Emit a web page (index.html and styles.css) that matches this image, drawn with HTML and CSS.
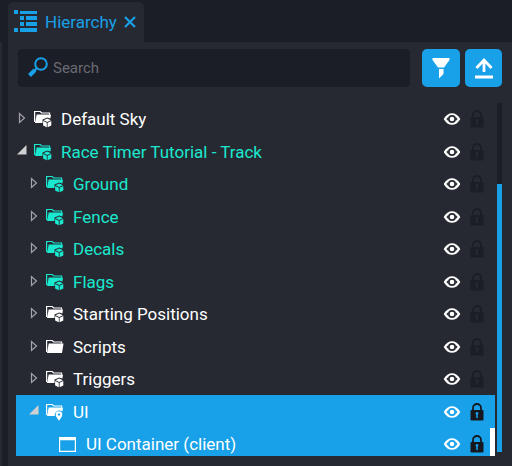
FILE: index.html
```
<!DOCTYPE html>
<html lang="en">
<head>
<meta charset="utf-8">
<title>Hierarchy</title>
<link rel="stylesheet" href="styles.css">
</head>
<body>
<svg class="sprite" aria-hidden="true">
  <symbol id="closed" viewBox="0 0 8 12"><path d="M1.500 1.500v9L6.500 6z" fill="none" stroke="#a2a4a8" stroke-width="1.200"/></symbol>
  <symbol id="open" viewBox="0 0 10 10"><path d="M9.500 0v9.500H0z" fill="#d0d0d0"/></symbol>
  <symbol id="folder" viewBox="0 0 18 18"><path d="M.6 14V2.500h5.600L7.700 4h7.800v1.500" fill="none" stroke="currentColor" stroke-width="1.200"/><path d="M2.700 5.600H17.500L16 15H1z" fill="currentColor"/></symbol>
  <symbol id="cube-folder" viewBox="0 0 18 18"><path d="M.6 12V1.500h5.600L7.700 3h7.800v1.500" fill="none" stroke="currentColor" stroke-width="1.200"/><path d="M2.700 4.600H17l-.6 4-3.200-1.200-4.700 2.100V13H1z" fill="currentColor"/><path d="M13.200 8.600l3.700 1.600-3.700 1.700-3.700-1.700zM9.100 11l3.700 1.700v4.600l-3.700-1.900zM17.300 11l-3.700 1.700v4.600l3.700-1.900z" fill="currentColor"/></symbol>
  <symbol id="pin-folder" viewBox="0 0 18 18"><path d="M.6 12V1.500h5.600L7.700 3h7.800v1.500" fill="none" stroke="currentColor" stroke-width="1.200"/><path d="M2.700 4.600H17l-.6 3.800C12.500 6 8.500 8.500 8.800 13H1z" fill="currentColor"/><path fill-rule="evenodd" d="M13 8.300a3.300 3.300 0 0 1 3.300 3.300C16.300 14 13 17.700 13 17.700S9.700 14 9.700 11.600A3.300 3.300 0 0 1 13 8.300zm0 2a1.200 1.200 0 1 0 .01 0z" fill="currentColor"/></symbol>
  <symbol id="window" viewBox="0 0 18 18"><path fill-rule="evenodd" d="M0 2h17v15H0zM1.200 5.200v10.600h14.600V5.200z" fill="currentColor"/></symbol>
  <symbol id="eye" viewBox="0 0 18 12"><path d="M.7 6C4.800-1.800 13.200-1.800 17.300 6 13.200 13.800 4.800 13.800 .7 6z" fill="#fff"/><circle cx="9" cy="6" r="4" fill="var(--row)"/><path d="M3.400 6L5.300 4v4zM14.600 6l-1.900-2v4z" fill="var(--row)"/><circle cx="9" cy="6" r="2.300" fill="#fff"/></symbol>
  <symbol id="lock" viewBox="0 0 14 18"><path d="M3 8V5a4 4 0 0 1 8 0v3" fill="none" stroke="var(--lock)" stroke-width="1.800"/><rect x=".5" y="7" width="13" height="10.500" rx="1" fill="var(--lock)"/><path d="M7 9a1.500 1.500 0 0 1 .8 2.700V15H6.200v-3.300A1.500 1.500 0 0 1 7 9z" fill="var(--row)"/></symbol>
</svg>

<header class="tabs">
  <div class="tab">
    <svg class="tab-icon" viewBox="0 0 24 24" fill="currentColor" aria-hidden="true"><path d="M0 0h4v4H0zM0 18h4v4H0zM6 1h17v3H6zM6 6h4v4H6zM12 6h11v4H12zM6 12h4v4H6zM12 12h11v4H12zM6 18h17v4H6z"/></svg>
    <span>Hierarchy</span>
    <button class="close" aria-label="Close"><svg viewBox="0 0 12 12"><path d="M1 1l10 10M11 1L1 11" stroke="currentColor" stroke-width="2.200"/></svg></button>
  </div>
</header>

<main class="panel">
  <div class="toolbar">
    <label class="search">
      <svg viewBox="0 0 20 20" aria-hidden="true"><circle cx="13" cy="7" r="5.800" fill="none" stroke="currentColor" stroke-width="2"/><path d="M9 11l-3 3" stroke="currentColor" stroke-width="2"/><path d="M7 13L1.500 18.500" stroke="currentColor" stroke-width="4"/></svg>
      <input type="text" placeholder="Search" aria-label="Search">
    </label>
    <button class="action" aria-label="Filter"><svg viewBox="0 0 20 22" fill="currentColor"><path d="M1.500 1h17v2L13 10.500H7L1.500 3zM8 12h4.500v5l-4 4H8z"/></svg></button>
    <button class="action" aria-label="Collapse all"><svg viewBox="0 0 20 22"><path d="M10 15V3M2.500 11L10 3l7.500 8M1 20h18" fill="none" stroke="currentColor" stroke-width="2.800"/></svg></button>
  </div>
  <div class="content">
    <ul class="tree">
      <li class="row"><button class="toggle" aria-label="Expand"><svg><use href="#closed"/></svg></button><svg class="kind"><use href="#cube-folder"/></svg><span class="name">Default Sky</span><button class="eye" aria-label="Visibility"><svg><use href="#eye"/></svg></button><button class="lock" aria-label="Lock"><svg><use href="#lock"/></svg></button></li>
      <li class="row group"><button class="toggle expanded" aria-label="Collapse"><svg><use href="#open"/></svg></button><svg class="kind"><use href="#cube-folder"/></svg><span class="name">Race Timer Tutorial - Track</span><button class="eye" aria-label="Visibility"><svg><use href="#eye"/></svg></button><button class="lock" aria-label="Lock"><svg><use href="#lock"/></svg></button></li>
      <li class="row child group"><button class="toggle" aria-label="Expand"><svg><use href="#closed"/></svg></button><svg class="kind"><use href="#cube-folder"/></svg><span class="name">Ground</span><button class="eye" aria-label="Visibility"><svg><use href="#eye"/></svg></button><button class="lock" aria-label="Lock"><svg><use href="#lock"/></svg></button></li>
      <li class="row child group"><button class="toggle" aria-label="Expand"><svg><use href="#closed"/></svg></button><svg class="kind"><use href="#cube-folder"/></svg><span class="name">Fence</span><button class="eye" aria-label="Visibility"><svg><use href="#eye"/></svg></button><button class="lock" aria-label="Lock"><svg><use href="#lock"/></svg></button></li>
      <li class="row child group"><button class="toggle" aria-label="Expand"><svg><use href="#closed"/></svg></button><svg class="kind"><use href="#cube-folder"/></svg><span class="name">Decals</span><button class="eye" aria-label="Visibility"><svg><use href="#eye"/></svg></button><button class="lock" aria-label="Lock"><svg><use href="#lock"/></svg></button></li>
      <li class="row child group"><button class="toggle" aria-label="Expand"><svg><use href="#closed"/></svg></button><svg class="kind"><use href="#cube-folder"/></svg><span class="name">Flags</span><button class="eye" aria-label="Visibility"><svg><use href="#eye"/></svg></button><button class="lock" aria-label="Lock"><svg><use href="#lock"/></svg></button></li>
      <li class="row child"><button class="toggle" aria-label="Expand"><svg><use href="#closed"/></svg></button><svg class="kind"><use href="#cube-folder"/></svg><span class="name">Starting Positions</span><button class="eye" aria-label="Visibility"><svg><use href="#eye"/></svg></button><button class="lock" aria-label="Lock"><svg><use href="#lock"/></svg></button></li>
      <li class="row child"><button class="toggle" aria-label="Expand"><svg><use href="#closed"/></svg></button><svg class="kind"><use href="#folder"/></svg><span class="name">Scripts</span><button class="eye" aria-label="Visibility"><svg><use href="#eye"/></svg></button><button class="lock" aria-label="Lock"><svg><use href="#lock"/></svg></button></li>
      <li class="row child"><button class="toggle" aria-label="Expand"><svg><use href="#closed"/></svg></button><svg class="kind"><use href="#cube-folder"/></svg><span class="name">Triggers</span><button class="eye" aria-label="Visibility"><svg><use href="#eye"/></svg></button><button class="lock" aria-label="Lock"><svg><use href="#lock"/></svg></button></li>
      <li class="row child selected"><button class="toggle expanded" aria-label="Collapse"><svg><use href="#open"/></svg></button><svg class="kind"><use href="#pin-folder"/></svg><span class="name">UI</span><button class="eye" aria-label="Visibility"><svg><use href="#eye"/></svg></button><button class="lock" aria-label="Lock"><svg><use href="#lock"/></svg></button></li>
      <li class="row leaf selected marked"><svg class="kind"><use href="#window"/></svg><span class="name">UI Container (client)</span><button class="eye" aria-label="Visibility"><svg><use href="#eye"/></svg></button><button class="lock" aria-label="Lock"><svg><use href="#lock"/></svg></button></li>
    </ul>
    <div class="track"><div class="thumb"></div></div>
  </div>
</main>
</body>
</html>
```
FILE: styles.css
```
:root {
  --bg: #1b1e26;
  --panel: #272932;
  --blue: #18a0e8;
  --teal: #1ae8cf;
}

* { box-sizing: border-box; }

body {
  margin: 0;
  height: 100vh;
  display: flex;
  flex-direction: column;
  overflow: hidden;
  background: var(--bg);
  color: #fff;
  font: 17px/24px Roboto, sans-serif;
}

svg { display: block; }
.sprite { position: absolute; width: 0; height: 0; }

button {
  display: block;
  flex: none;
  padding: 0;
  border: 0;
  background: none;
  color: inherit;
}

.tabs {
  flex: none;
  padding: 2px 8px 0;
}

.tab {
  display: flex;
  align-items: center;
  width: max-content;
  height: 40px;
  padding: 0 8px 0 6px;
  border-radius: 6px 6px 0 0;
  background: var(--panel);
  color: var(--blue);
}

.tab-icon {
  width: 24px;
  height: 24px;
  margin-right: 7px;
}

.close { margin-left: 7px; }
.close svg { width: 12px; height: 12px; }

.panel {
  flex: 1;
  min-height: 0;
  display: flex;
  flex-direction: column;
  padding: 7px 10px 10px 16px;
  background: linear-gradient(to right, var(--panel) 2px, var(--bg) 2px 8px, var(--panel) 8px);
}

.toolbar {
  flex: none;
  display: flex;
  gap: 5px;
  height: 38px;
  margin: 0 0 16px 2px;
}

.search {
  flex: 1;
  display: flex;
  align-items: center;
  gap: 5px;
  margin-right: 7px;
  padding: 0 10px;
  border-radius: 4px;
  background: var(--bg);
  color: var(--blue);
}

.search svg { flex: none; width: 20px; height: 20px; margin-bottom: 2px; }

.search input {
  flex: 1;
  min-width: 0;
  padding: 0;
  border: 0;
  outline: 0;
  background: none;
  color: #fff;
  font: 15px/20px Roboto, sans-serif;
}

.search input::placeholder { color: #6a6c73; opacity: 1; }

.action {
  display: flex;
  align-items: center;
  justify-content: center;
  width: 38px;
  border-radius: 5px;
  background: var(--blue);
}

.action + .action { width: 37px; }
.action svg { width: 20px; height: 22px; }

.content {
  flex: 1;
  min-height: 0;
  display: flex;
  gap: 2px;
}

.tree {
  flex: 1;
  margin: 0;
  padding: 0;
  overflow: hidden;
  list-style: none;
}

.row {
  --row: var(--panel);
  --lock: #1b1e26;
  position: relative;
  display: flex;
  align-items: center;
  height: 32px;
  padding: 0 11px 0 1px;
  background: var(--row);
}

.row:nth-child(even) { height: 33px; }
.child { padding-left: 13px; }
.leaf { padding-left: 43px; }
.group { color: var(--teal); }
.selected { --row: var(--blue); --lock: #15191f; }

.marked::after {
  content: "";
  position: absolute;
  inset: 0 0 0 auto;
  width: 5px;
  background: #fff;
}

.toggle { width: 17px; }
.toggle svg { width: 8px; height: 12px; margin: 0 0 2px 1px; }
.toggle.expanded svg { width: 10px; height: 10px; margin: 0 0 4px; }

.kind {
  flex: none;
  width: 18px;
  height: 18px;
  margin-right: 9px;
}

.name {
  flex: 1;
  white-space: nowrap;
}

.eye svg { width: 18px; height: 12px; }
.lock { margin-left: 9px; }
.lock svg { width: 14px; height: 18px; }

.track {
  flex: none;
  width: 5px;
  margin-bottom: 4px;
  padding-top: 81px;
  background: var(--bg);
}

.thumb {
  height: 100%;
  background: var(--blue);
}
```
